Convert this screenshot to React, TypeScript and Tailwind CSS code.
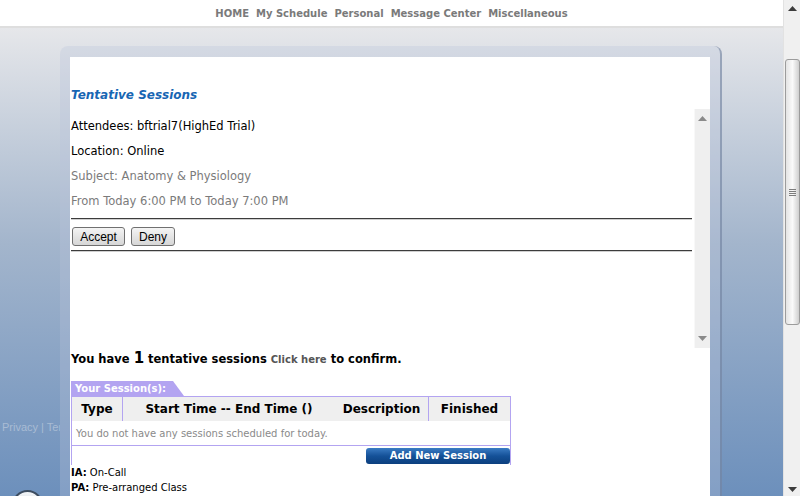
const navItems = ["HOME", "My Schedule", "Personal", "Message Center", "Miscellaneous"];

const Arrow = ({ up, color }: { up?: boolean; color: string }) => (
  <svg width="9" height="5" viewBox="0 0 9 5">
    <polygon points={up ? "4.5,0 9,5 0,5" : "0,0 9,0 4.5,5"} fill={color} />
  </svg>
);

const PageScrollbar = () => (
  <div className="w-[17px] h-full bg-[#f0f0f0] border-l border-[#e2e2e2] flex flex-col items-center">
    <div className="h-[17px] flex items-center justify-center">
      <Arrow up color="#3c3c3c" />
    </div>
    <div className="mt-[42px] w-[15px] h-[266px] rounded-[3px] border border-[#9c9c9c] bg-gradient-to-r from-[#e4e4e4] via-[#fafafa] to-[#cfcfcf] flex flex-col items-center justify-center gap-[1px]">
      <div className="w-[7px] h-px bg-[#7d7d7d]" />
      <div className="w-[7px] h-px bg-[#7d7d7d]" />
      <div className="w-[7px] h-px bg-[#7d7d7d]" />
      <div className="w-[7px] h-px bg-[#7d7d7d]" />
    </div>
    <div className="mt-auto h-[14px] flex items-center justify-center">
      <Arrow color="#3c3c3c" />
    </div>
  </div>
);

const BoxScrollbar = () => (
  <div className="w-[16px] h-full bg-[#efefef] border-l border-[#f8f8f8] flex flex-col items-center justify-between py-[7px]">
    <Arrow up color="#8a8a8a" />
    <Arrow color="#8a8a8a" />
  </div>
);

const GrayButton = ({ label, w }: { label: string; w: string }) => (
  <button
    className={`${w} h-[19px] rounded-[3px] border border-[#707070] bg-gradient-to-b from-[#f4f4f4] to-[#d6d6d6] text-[12px] leading-none text-black font-['Liberation_Sans',Arial,sans-serif]`}
  >
    {label}
  </button>
);

export default function App() {
  return (
    <div className="w-[800px] h-[496px] overflow-hidden flex bg-white font-['DejaVu_Sans',Verdana,sans-serif]">
      <div className="relative w-[783px] h-full flex flex-col">
        <header className="h-[28px] shrink-0 bg-white border-b-2 border-[#dedede] flex justify-center pt-[7px]">
          <nav className="flex gap-[7px] text-[10px] leading-[13px] font-bold text-[#7a7a7a]">
            {navItems.map((n) => (
              <a key={n} href="#">
                {n}
              </a>
            ))}
          </nav>
        </header>

        <div className="relative flex-1 bg-gradient-to-b from-[#e6e7ea] via-[#a3b5cc] via-45% to-[#6a8ebb]">
          {/* footer links, partly hidden behind the panel */}
          <div className="absolute left-0 top-[391px] w-[60px] overflow-hidden whitespace-nowrap text-[11px] text-[#a9bcd4] font-['Liberation_Sans',Arial,sans-serif] pl-[2px]">
            Privacy | Terms
          </div>
          <div className="absolute left-[12px] top-[462px] w-[31px] h-[31px] rounded-full border-2 border-[#3d4d60] bg-gradient-to-b from-[#f4f6f8] to-[#b8c4d2]" />

          <div className="relative ml-[60px] mt-[18px] w-[662px] rounded-t-[8px] bg-[#b8c2da]/30 pl-[10px] pr-[10px] pt-[11px] border-r-2 border-[#5e7190]/50">
            <div className="bg-white h-[450px] pt-[30px]">
              <h2 className="pl-px text-[12px] leading-[16px] font-bold italic text-[#1766b3]">Tentative Sessions</h2>

              <div className="mt-[6px] flex h-[239px]">
                <div className="flex-1 pl-px pr-[2px] pt-[5px] text-[11.5px] leading-[25px]">
                  <p className="text-black">Attendees: bftrial7(HighEd Trial)</p>
                  <p className="text-black">Location: Online</p>
                  <p className="text-[#7b7b7b]">Subject: Anatomy &amp; Physiology</p>
                  <p className="text-[#7b7b7b]">From Today 6:00 PM to Today 7:00 PM</p>
                  <div className="mt-[4px] h-[2px] border-t border-[#3c3c3c] border-b border-b-[#cfcfcf]" />
                  <div className="flex gap-[6px] pl-px pt-[7px] pb-[4px] leading-none">
                    <GrayButton label="Accept" w="w-[53px]" />
                    <GrayButton label="Deny" w="w-[44px]" />
                  </div>
                  <div className="h-[2px] border-t border-[#3c3c3c] border-b border-b-[#cfcfcf]" />
                </div>
                <BoxScrollbar />
              </div>

              <p className="mt-[2px] pl-px h-[18px] text-[11.5px] leading-[18px] font-bold text-black">
                You have <span className="text-[15px] leading-[15px]">1</span> tentative sessions{" "}
                <a href="#" className="text-[10px] text-[#555555]">
                  Click here
                </a>{" "}
                to confirm.
              </p>

              <div className="mt-[13px] ml-px w-[440px]">
                <div className="flex h-[15px]">
                  <div className="bg-[#b3a4f1] text-white text-[10px] leading-[15px] font-bold pl-[4px] pr-[7px]">
                    Your Session(s):
                  </div>
                  <svg width="11" height="15" viewBox="0 0 11 15">
                    <polygon points="0,0 0,15 11,15" fill="#b3a4f1" />
                  </svg>
                </div>
                <div className="border-x border-t border-[#b3a4f1]">
                  <div className="grid grid-cols-[51px_212px_94px_81px] h-[24px] bg-[#efefef] text-[12px] font-bold text-black leading-[24px] text-center">
                    <div className="border-r border-[#b3a4f1]">Type</div>
                    <div>Start Time -- End Time ()</div>
                    <div className="border-r border-[#b3a4f1]">Description</div>
                    <div>Finished</div>
                  </div>
                  <div className="h-[25px] border-b border-[#b3a4f1] pl-[4px] text-[10px] leading-[25px] text-[#8a8a8a]">
                    You do not have any sessions scheduled for today.
                  </div>
                  <div className="h-[19px] flex justify-end items-start pt-[2px]">
                    <button className="w-[144px] h-[16px] rounded-[3px] bg-gradient-to-b from-[#3a7cc4] via-[#145198] to-[#0c3f7e] text-white text-[10px] leading-[16px] font-bold">
                      Add New Session
                    </button>
                  </div>
                </div>
              </div>

              <div className="pl-px text-[10px] leading-[15px] text-black">
                <p>
                  <b>IA:</b> On-Call
                </p>
                <p>
                  <b>PA:</b> Pre-arranged Class
                </p>
              </div>
            </div>
          </div>
        </div>
      </div>
      <PageScrollbar />
    </div>
  );
}
